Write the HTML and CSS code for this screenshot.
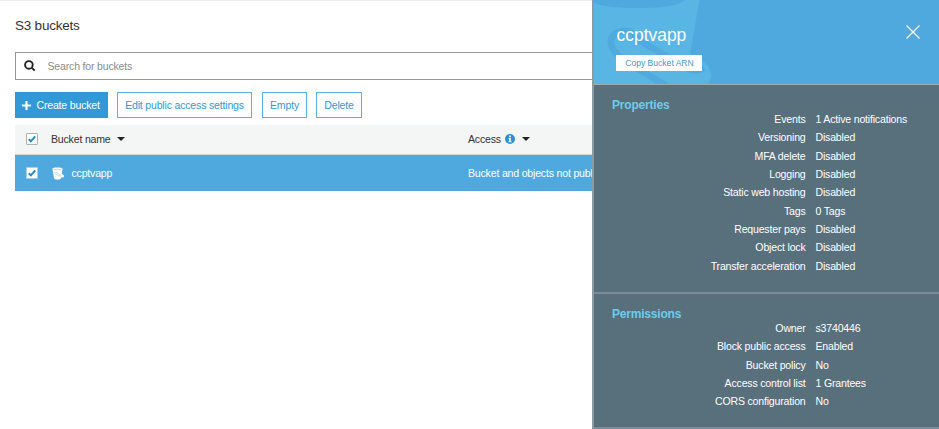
FILE: index.html
```
<!DOCTYPE html>
<html lang="en">
<head>
<meta charset="utf-8">
<title>S3 buckets</title>
<link rel="stylesheet" href="styles.css">
</head>
<body>
<div class="app">
  <main class="content">
    <h1 class="title">S3 buckets</h1>
    <div class="search">
      <svg class="search-icon" viewBox="0 0 12 12"><circle cx="4.9" cy="4.9" r="3.8"/><path d="M7.7 7.7 10.7 10.7"/></svg>
      <span>Search for buckets</span>
    </div>
    <div class="toolbar">
      <button class="btn primary"><svg class="plus" viewBox="0 0 9 9"><path d="M4.5 0V9M0 4.5H9"/></svg>Create bucket</button>
      <button class="btn edit">Edit public access settings</button>
      <button class="btn empty">Empty</button>
      <button class="btn">Delete</button>
    </div>
    <div class="row head">
      <span class="check"><svg viewBox="0 0 8 8"><path d="M.8 4.3 2.9 6.3 7.2 1.3"/></svg></span>
      <span class="name">Bucket name<i class="caret"></i></span>
      <span class="access">Access<svg class="info" viewBox="0 0 10 10"><circle cx="5" cy="5" r="5"/><path d="M4.2 1.5H5.8V3H4.2ZM3.5 3.8H5.8V7.2H6.5V8.2H3.5V7.2H4.2V4.8H3.5Z"/></svg><i class="caret"></i></span>
    </div>
    <div class="row selected">
      <span class="check"><svg viewBox="0 0 8 8"><path d="M.8 4.3 2.9 6.3 7.2 1.3"/></svg></span>
      <span class="name"><svg class="bucket" viewBox="0 0 13 13"><path class="body" d="M.4 1.7C.4 0 10.6 0 10.6 1.7L9.8 6.6 11.9 8.6C12.8 9.9 11.5 10.9 9.2 10.2L9 11.3C8.6 12.9 2.4 12.9 2 11.3Z"/><path class="rim" d="M1.4 2C2.7 3 8.3 3 9.6 2M3 4.8C1.6 6.4 5 8.6 9 9.2M3.6 5 8.8 8.2"/></svg>ccptvapp</span>
      <span class="access">Bucket and objects not public</span>
    </div>
  </main>
  <aside class="panel">
    <header class="hero">
      <svg class="art" viewBox="0 0 345 84"><path class="pail" d="M0 0H105.5L96 54 110 62Q120 71 116 80L114 84H0Z"/><path class="mouth" d="M0 3Q12 8 45 8Q83 8 91 0H0Z"/><path class="handle" d="M39 33C29 27 15 33 17 45C19 56 44 69 73 86M38 36 94 69Q102 73 110 68"/></svg>
      <div>
        <h2 class="bucket-title">ccptvapp</h2>
        <button class="copy">Copy Bucket ARN</button>
      </div>
      <svg class="close" viewBox="0 0 14 14"><path d="M.5.5 13.5 13.5M13.5.5.5 13.5"/></svg>
    </header>
    <section class="section properties">
      <h3>Properties</h3>
      <dl>
        <dt>Events</dt><dd>1 Active notifications</dd>
        <dt>Versioning</dt><dd>Disabled</dd>
        <dt>MFA delete</dt><dd>Disabled</dd>
        <dt>Logging</dt><dd>Disabled</dd>
        <dt>Static web hosting</dt><dd>Disabled</dd>
        <dt>Tags</dt><dd>0 Tags</dd>
        <dt>Requester pays</dt><dd>Disabled</dd>
        <dt>Object lock</dt><dd>Disabled</dd>
        <dt>Transfer acceleration</dt><dd>Disabled</dd>
      </dl>
    </section>
    <section class="section permissions">
      <h3>Permissions</h3>
      <dl>
        <dt>Owner</dt><dd>s3740446</dd>
        <dt>Block public access</dt><dd>Enabled</dd>
        <dt>Bucket policy</dt><dd>No</dd>
        <dt>Access control list</dt><dd>1 Grantees</dd>
        <dt>CORS configuration</dt><dd>No</dd>
      </dl>
    </section>
  </aside>
</div>
</body>
</html>
```
FILE: styles.css
```
* { box-sizing: border-box; }
body { margin: 0; background: #fff; color: #333; font: 10.55px/14px "Liberation Sans", Arial, sans-serif; letter-spacing: -0.185px; }
h1, h2, h3, dl, dd { margin: 0; font-weight: normal; }
svg { fill: none; flex: none; }
button { font: inherit; letter-spacing: inherit; }
.app { display: flex; width: 939px; height: 429px; overflow: hidden; }
.content { width: 592px; flex: none; overflow: hidden; border-top: 1px solid #eee; padding-left: 15px; }
.title { font-size: 13.5px; line-height: 16px; letter-spacing: -0.22px; margin-top: 17px; color: #333; }
.search { display: flex; align-items: center; height: 28px; margin-top: 18px; border: 1px solid #999; border-right: 0; color: #8c8c8c; padding-left: 8px; }
.search-icon { width: 12px; height: 12px; margin-right: 11.5px; stroke: #222; stroke-width: 1.9; }
.toolbar { display: flex; margin-top: 12px; height: 26px; }
.btn { border: 1px solid #5fb0e2; background: #fff; color: #3199d7; padding: 0 7px; height: 26px; white-space: nowrap; width: 46px; margin-right: 9px; }
.btn.primary { background: #3199d7; border-color: #3199d7; color: #fff; width: 93px; display: flex; align-items: center; padding: 0 6px; }
.btn.edit { width: 135px; margin-right: 10px; }
.btn.empty { width: 45px; }
.plus { width: 9px; height: 9px; stroke: #fff; stroke-width: 2.2; margin-right: 5.5px; }
.row { display: flex; align-items: center; white-space: nowrap; }
.row.head { margin-top: 7px; height: 30px; padding-bottom: 1px; background: #f4f6f6; border-bottom: 1px solid #d2d7d9; }
.row.selected { height: 36px; background: #4fa9de; color: #fff; }
.check { width: 12px; height: 12px; margin: 0 14px 0 11px; border: 1px solid #abb3b5; background: #fff; display: flex; align-items: center; justify-content: center; flex: none; border-radius: 1px; }
.selected .check { border-color: #a6cfea; }
.check svg { width: 8px; height: 8px; stroke: #2189cf; stroke-width: 1.9; }
.name { display: flex; align-items: center; width: 416px; flex: none; }
.head .name { margin-left: -1px; width: 417px; }
.access { display: flex; align-items: center; }
.caret { border: 4px solid transparent; border-top-color: #222; border-bottom: 0; margin-left: 6px; }
.info { width: 10px; height: 10px; margin: 0 1px 0 4px; }
.info circle { fill: #2793d5; }
.info path { fill: #fff; }
.bucket { width: 13px; height: 13px; margin-right: 6.5px; }
.body { fill: #fff; }
.rim { stroke: #4fa9de; stroke-width: .4; }
.panel { width: 347px; flex: none; border-left: 2px solid #8c9aa2; background: #586f7c; color: #fff; }
.hero { height: 85px; position: relative; display: flex; justify-content: space-between; background: #4fa9de; border-bottom: 1px solid #a2acb0; padding: 25px 19px 0 22.5px; }
.hero > * { position: relative; }
.hero .art { position: absolute; left: 0; top: 0; width: 345px; height: 84px; }
.pail { fill: #58b5e4; }
.mouth { fill: #4fa9de; }
.handle { stroke: #4fabdf; stroke-width: 6.5; }
.bucket-title { font-size: 17.45px; line-height: 20px; letter-spacing: 0; }
.copy { display: block; width: 86px; height: 16px; margin: 10px 0 0 -0.5px; padding: 0 0 0 1px; border: 0; background: #fff; color: #3c98d5; font-size: 8.55px; letter-spacing: 0; line-height: 16px; white-space: nowrap; }
.close { width: 14px; height: 14px; stroke: #fff; stroke-width: 1.3; }
.section { padding: 12px 0 0 18px; border-bottom: 2px solid #7c8b95; }
.properties { height: 209px; }
.permissions { height: 135px; }
.section h3 { color: #6bcdec; font-size: 12px; line-height: 16px; font-weight: bold; letter-spacing: -0.2px; }
dl { display: grid; grid-template-columns: 193.5px 1fr; column-gap: 10px; grid-auto-rows: 18.38px; line-height: 18.38px; margin-top: -3.2px; }
dt { text-align: right; }
```
